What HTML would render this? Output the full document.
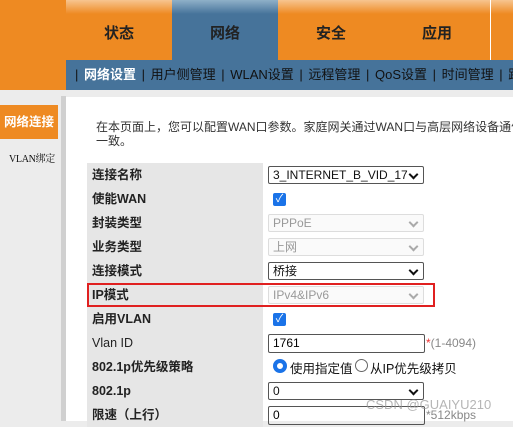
<!DOCTYPE html>
<html><head><meta charset="utf-8"><style>
*{margin:0;padding:0;box-sizing:border-box}
body{width:513px;height:421px;overflow:hidden;background:#ececec;font-family:"Liberation Sans","Noto Sans CJK SC",sans-serif;position:relative}
.a{position:absolute}
.tab{position:absolute;top:0;height:60px;width:106px;text-align:center;line-height:68px;font-size:15px;font-weight:bold;color:#222;background:linear-gradient(#f7c590 0,#ee8a22 14px,#ee8a22 100%)}
.sub{position:absolute;top:60px;left:66px;width:447px;height:30px;background:#46739a;color:#111;font-size:13px;line-height:30px;white-space:nowrap;padding-left:9px;word-spacing:2px}
.sub b{color:#fff}
.lbl{position:absolute;left:87px;width:176px;height:24px;background:#e6e6e6;font-size:12.5px;font-weight:bold;color:#222;line-height:24px;padding-left:5px}
.sel{position:absolute;left:268px;width:156px;height:18px;border:1px solid #555;border-radius:2px;background:#fff;font-size:12px;line-height:16px;padding-left:4px;color:#111}
.sel.d{border-color:#ddd;color:#999;background:#fafafa}
.sel::after{content:"";position:absolute;right:6px;top:4px;width:5px;height:5px;border-right:2px solid #111;border-bottom:2px solid #111;transform:rotate(45deg)}
.sel.d::after{border-color:#aaa}
.cb{position:absolute;left:273px;width:13px;height:13px;background:#1a73e8;border-radius:2px;color:#fff;font-size:11px;line-height:13px;text-align:center}
</style></head><body>
<div class="a" style="left:0;top:0;width:513px;height:90px;background:#ee8a22"></div>
<div class="tab" style="left:66px">状态</div>
<div class="tab" style="left:172px;background:linear-gradient(#8fb0c8 0,#46739a 14px,#46739a 100%)">网络</div>
<div class="tab" style="left:278px">安全</div>
<div class="tab" style="left:384px">应用</div>
<div class="tab" style="left:490px"></div>
<div class="a" style="left:490px;top:0;width:1px;height:60px;background:#fff"></div>
<div class="sub">| <b>网络设置</b> | 用户侧管理 | WLAN设置 | 远程管理 | QoS设置 | 时间管理 | 路</div>
<div class="a" style="left:0;top:105px;width:58px;height:34px;background:#ee8a22;color:#fff;font-weight:bold;font-size:12.5px;line-height:34px;text-align:center">网络连接</div>
<div class="a" style="left:9px;top:150px;font-size:10px;color:#111;white-space:nowrap;letter-spacing:-0.3px;font-family:'Liberation Serif','Noto Serif CJK SC',serif">VLAN绑定</div>
<div class="a" style="left:61px;top:96px;width:5px;height:325px;background:#d0d0d0"></div>
<div class="a" style="left:66px;top:97px;width:447px;height:324px;background:#fff"></div>
<div class="a" style="left:96px;top:120px;font-size:12px;color:#333;line-height:14px;white-space:nowrap">在本页面上，您可以配置WAN口参数。家庭网关通过WAN口与高层网络设备通信<br>一致。</div>
<div class="lbl" style="top:163px">连接名称</div>
<div class="lbl" style="top:187px">使能WAN</div>
<div class="lbl" style="top:211px">封装类型</div>
<div class="lbl" style="top:235px">业务类型</div>
<div class="lbl" style="top:259px">连接模式</div>
<div class="lbl" style="top:283px">IP模式</div>
<div class="lbl" style="top:307px">启用VLAN</div>
<div class="lbl" style="top:331px;font-weight:normal">Vlan ID</div>
<div class="lbl" style="top:355px">802.1p优先级策略</div>
<div class="lbl" style="top:379px">802.1p</div>
<div class="lbl" style="top:403px">限速（上行）</div>
<div class="sel" style="top:166px">3_INTERNET_B_VID_17</div>
<div class="cb" style="top:193px">✓</div>
<div class="sel d" style="top:214px">PPPoE</div>
<div class="sel d" style="top:238px">上网</div>
<div class="sel" style="top:262px">桥接</div>
<div class="sel d" style="top:286px">IPv4&amp;IPv6</div>
<div class="cb" style="top:313px">✓</div>
<div class="a" style="left:268px;top:334px;width:157px;height:19px;border:1px solid #555;border-radius:2px;font-size:12px;line-height:17px;padding-left:4px">1761</div>
<div class="a" style="left:426px;top:336px;font-size:12px;color:#888"><span style="color:#e33">*</span>(1-4094)</div>
<div class="a" style="left:273px;top:359px;width:14px;height:14px;border-radius:50%;border:4px solid #1a73e8"></div>
<div class="a" style="left:290px;top:358px;font-size:12.5px;color:#111">使用指定值</div>
<div class="a" style="left:355px;top:359px;width:13px;height:13px;border-radius:50%;border:1px solid #666"></div>
<div class="a" style="left:370px;top:358px;font-size:12.5px;color:#111">从IP优先级拷贝</div>
<div class="sel" style="top:382px">0</div>
<div class="a" style="left:268px;top:406px;width:157px;height:19px;border:1px solid #555;border-radius:2px;font-size:12px;line-height:17px;padding-left:4px">0</div>
<div class="a" style="left:426px;top:408px;font-size:12px;color:#888">*512kbps</div>
<div class="a" style="left:366px;top:397px;font-size:13px;color:rgba(150,150,150,.7)">CSDN @GUAIYU210</div>
<div class="a" style="left:87px;top:283px;width:348px;height:24px;border:2px solid #e02020"></div>
</body></html>
